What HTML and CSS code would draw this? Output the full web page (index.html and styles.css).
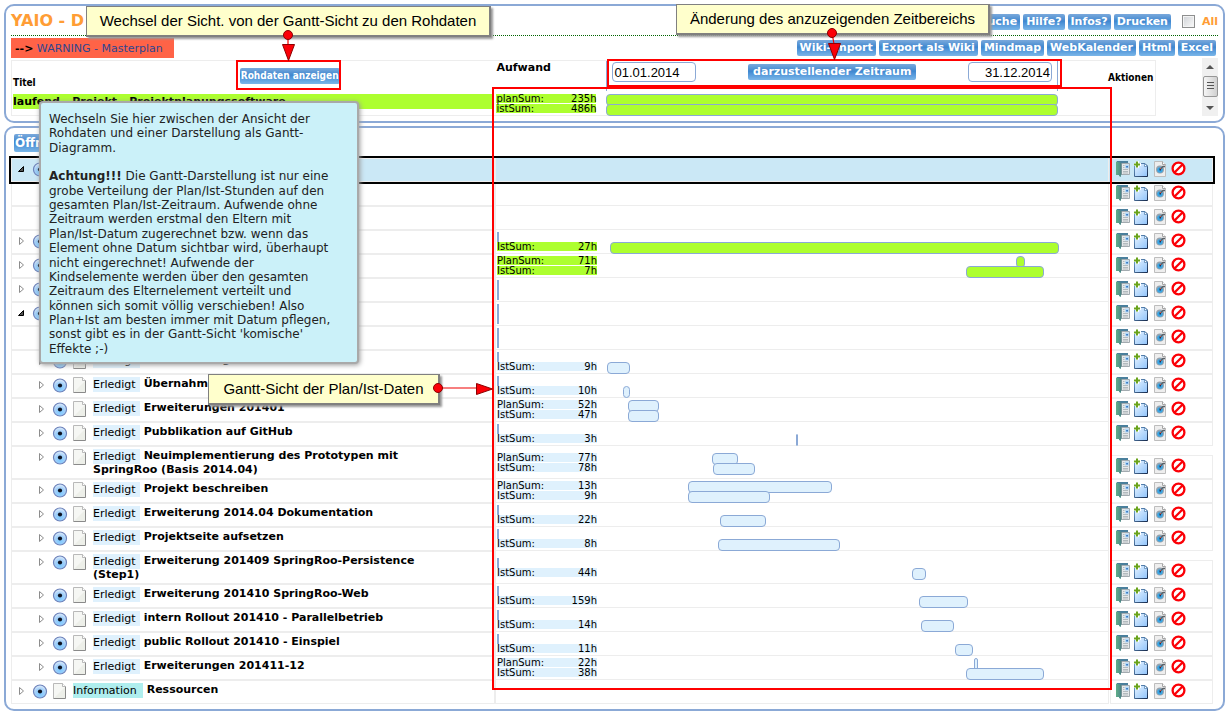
FILE: index.html
```html
<!DOCTYPE html>
<html lang="de">
<head>
<meta charset="utf-8">
<title>YAIO</title>
<link rel="stylesheet" href="styles.css">
</head>
<body>
<svg class="defs" aria-hidden="true">
  <defs>
    <linearGradient id="g-book" x1="0" y1="0" x2="1" y2="0"><stop offset="0" stop-color="#5fae88"/><stop offset="1" stop-color="#4f8a8a"/></linearGradient>
    <linearGradient id="g-new" x1="0" y1="0" x2="1" y2="1"><stop offset="0" stop-color="#e8f4ff"/><stop offset="1" stop-color="#8fc3fb"/></linearGradient>
    <linearGradient id="g-edge" x1="0" y1="0" x2="1" y2="1"><stop offset="0" stop-color="#6fa3d6"/><stop offset="1" stop-color="#16294a"/></linearGradient>
    <radialGradient id="g-radio" cx=".5" cy=".7" r=".65"><stop offset="0" stop-color="#7cc8ff"/><stop offset=".6" stop-color="#a3d0f9"/><stop offset="1" stop-color="#dbeafb"/></radialGradient>
  </defs>
  <symbol id="i-book" viewBox="0 0 18 18">
    <path d="M2 1h11v3H7v10H2z" fill="#4a7f9c"/>
    <path d="M1 1.500l5 1v14.500l-2-1v-1H1z" fill="url(#g-book)"/>
    <path d="M6.500 3.500h8v11h-8z" fill="#e6e8ea" stroke="#a3abb0"/>
    <path d="M6 3v12" stroke="#4d7d80"/>
    <path d="M8 5.500h1.500M8 7.500h1.500M8 9.500h5M8 11.500h5M8 13h5" stroke="#a5adb2" stroke-width=".8"/>
    <path d="M10 4.500h4v4h-4z" fill="#b4d8f6"/><path d="M11.300 6h1.500v1.500h-1.500z" fill="#1b63b5"/>
  </symbol>
  <symbol id="i-new" viewBox="0 0 18 18">
    <path d="M1.500 3.500h10.500l2.500 2.500v10.500h-13z" fill="url(#g-new)" stroke="url(#g-edge)"/>
    <path d="M11.500 3.500v3h3z" fill="#fff" stroke="#4c7cae" stroke-width=".7"/>
    <path d="M3 1h3v2h2v3H6v2H3V6H1V3h2z" fill="#fff"/>
    <path d="M4 1.500v6M1 4.500h6" stroke="#6aa31c" stroke-width="2"/>
  </symbol>
  <symbol id="i-view" viewBox="0 0 18 18">
    <path d="M3.500 1.500h8l3 3v12h-11z" fill="#eeeeee" stroke="#bdbdbd"/>
    <path d="M11.500 1.500v3h3" fill="#fff" stroke="#a5a5a5"/>
    <circle cx="9" cy="9.500" r="4" fill="#97a3ae"/>
    <circle cx="9" cy="10" r="2.800" fill="#39a5e4"/>
    <path d="M9 9.500l3-3h2" stroke="#5b6268" stroke-width="1.500" fill="none"/>
    <path d="M8.500 8.500h1.500v2h-1.500z" fill="#28324e"/><path d="M9 8h1v1H9z" fill="#d45545"/>
  </symbol>
  <symbol id="i-stop" viewBox="0 0 18 18">
    <circle cx="9.500" cy="8.500" r="5.900" fill="#fff" stroke="#fb0007" stroke-width="2.300"/>
    <path d="M5.500 12.500l8-8" stroke="#fb0007" stroke-width="2.300"/>
  </symbol>
  <symbol id="i-radio" viewBox="0 0 16 16">
    <circle cx="8" cy="7.500" r="6.500" fill="url(#g-radio)" stroke="#6d83bb" stroke-width="1.200"/>
    <circle cx="8" cy="7.500" r="2.100" fill="#0d1220"/>
  </symbol>
  <symbol id="i-file" viewBox="0 0 14 16">
    <path d="M.500 .500h9l3 3v12H.500z" fill="#f6f7f4"/>
    <path d="M1 15L12 4v11z" fill="#edefe9"/>
    <path d="M.500 15.500V.500h9l3 3" fill="none" stroke="#b9b9b9"/>
    <path d="M12.500 3.500v12H.500" fill="none" stroke="#8a8a8a"/>
    <path d="M9.500 .500v3h3" fill="#fff" stroke="#aaa" stroke-width=".8"/>
  </symbol>
  <symbol id="i-closed" viewBox="0 0 10 10"><path d="M3.500 1.500v7l4-3.500z" fill="#fff" stroke="#8c8c8c"/></symbol>
  <symbol id="i-open" viewBox="0 0 10 10"><path d="M7.500 2.500v5h-5z" fill="#555" stroke="#000"/></symbol>
</svg>

<main class="page">
  <section class="panel head-panel">
    <header class="title-bar">
      <h1>YAIO - D</h1>
      <div class="buttons">
        <button class="btn">Suche</button><button class="btn">Hilfe?</button><button class="btn">Infos?</button><button class="btn">Drucken</button>
        <label class="all"><input type="checkbox">All</label>
      </div>
    </header>
    <div class="sub-bar">
      <p class="warning"><b>--&gt;</b> <a href="#masterplan">WARNING - Masterplan</a></p>
      <div class="buttons">
        <button class="btn">Wiki-Import</button><button class="btn">Export als Wiki</button><button class="btn">Mindmap</button><button class="btn">WebKalender</button><button class="btn">Html</button><button class="btn">Excel</button>
      </div>
    </div>
    <div class="summary">
      <table class="summary-table">
        <tr class="caption-row">
          <th class="s-title"><div class="s-title-in"><span>Titel</span><button class="btn raw">Rohdaten anzeigen</button></div></th>
          <th class="s-gantt"><div class="range"><span class="effort">Aufwand</span>
            <div class="range-in"><input class="date" type="text" aria-label="Von" value="01.01.2014"><button class="btn period">darzustellender Zeitraum</button><input class="date end" type="text" aria-label="Bis" value="31.12.2014"></div></div></th>
          <th class="s-act">Aktionen</th>
        </tr>
        <tr class="sum-row">
          <td class="s-title"><div class="project">laufend - Projekt - Projektplanungssoftware</div></td>
          <td class="s-gantt" id="summary-gantt"></td>
          <td class="s-act"></td>
        </tr>
      </table>
      <div class="scrollbar"><i class="up"></i><i class="thumb"></i><i class="down"></i></div>
    </div>
  </section>

  <section class="panel tree-panel">
    <button class="btn open-all">Öffnen</button>
    <table class="tree">
      <colgroup><col class="c-title"><col><col class="c-act"></colgroup>
      <tbody id="rows"></tbody>
    </table>
  </section>
</main>

<aside class="tip">
  <p>Wechseln Sie hier zwischen der Ansicht der<br>Rohdaten und einer Darstellung als Gantt-<br>Diagramm.</p>
  <p><b>Achtung!!!</b> Die Gantt-Darstellung ist nur eine<br>grobe Verteilung der Plan/Ist-Stunden auf den<br>gesamten Plan/Ist-Zeitraum. Aufwende ohne<br>Zeitraum werden erstmal den Eltern mit<br>Plan/Ist-Datum zugerechnet bzw. wenn das<br>Element ohne Datum sichtbar wird, überhaupt<br>nicht eingerechnet! Aufwende der<br>Kindselemente werden über den gesamten<br>Zeitraum des Elternelement verteilt und<br>können sich somit völlig verschieben! Also<br>Plan+Ist am besten immer mit Datum pflegen,<br>sonst gibt es in der Gantt-Sicht 'komische'<br>Effekte ;-)</p>
</aside>

<div class="mark mark-raw"></div>
<div class="mark mark-range"></div>
<div class="mark mark-gantt"></div>
<div class="callout call-view">Wechsel der Sicht. von der Gantt-Sicht zu den Rohdaten</div>
<div class="callout call-range">Änderung des anzuzeigenden Zeitbereichs</div>
<div class="callout call-gantt">Gantt-Sicht der Plan/Ist-Daten</div>
<svg class="arrows" width="1229" height="714" aria-hidden="true">
  <g stroke="#f00000" stroke-width="1.200"><path d="M288 35v10M832 33l2 11M438 388h40"/></g>
  <g fill="#fb0007" stroke="#8c0000">
    <path d="M282.500 44.500h12l-6 16zM828.500 43.500h12l-6 16zM476.500 383.500v11l16-5.500z"/>
    <circle cx="288" cy="35" r="4.500"/><circle cx="832" cy="33" r="4.500"/><circle cx="438" cy="388" r="4.500"/>
  </g>
</svg>
<script src="rows.js"></script>
</body>
</html>
```

FILE: styles.css
```css
* { box-sizing: border-box; }
body { margin: 0; background: #fff; color: #000; font: 11px/14px "DejaVu Sans", Verdana, sans-serif; }
h1, p { margin: 0; }
button { margin: 0; padding: 0; border: 0; background: none; font: inherit; }
.defs { position: absolute; width: 0; height: 0; }
.page { display: flex; flex-direction: column; gap: 3px; padding: 4px; }
.panel { border: 2px solid #8ba9d6; border-radius: 10px; padding: 0 5px 5px; }

.btn { height: 16px; padding: 0 3px; border-radius: 2px; color: #fff; font-weight: bold; line-height: 16px; white-space: nowrap;
  background: linear-gradient(#7aa9dc, #3f87cf 45%, #4a90d6 55%, #7ab6e8); }
.buttons { display: flex; align-items: center; gap: 3px; }

.title-bar { display: flex; justify-content: space-between; align-items: center; height: 30px; border-bottom: 1px dotted #006400; }
.title-bar .btn { margin-top: 2px; }
h1 { color: #ff9d35; font-size: 16px; line-height: 20px; }
.all { display: flex; align-items: center; gap: 7px; margin: 2px 0 0 8px; color: #ff9d35; font-weight: bold; }
.all input { appearance: none; width: 13px; height: 13px; margin: 0; border: 1px solid #8e8f8f; background: linear-gradient(135deg, #cfd2d6, #fafafa); box-shadow: inset 0 0 0 1px #f4f4f4; }

.sub-bar { display: flex; justify-content: space-between; align-items: center; height: 20px; margin-top: 2px; padding-right: 2px; }
.warning { height: 20px; padding: 0 11px 0 4px; background: #ff6347; line-height: 22px; }
.warning a { color: #2f4590; text-decoration: none; }

.summary { display: flex; align-items: flex-start; }
.summary-table { flex: 1; margin-top: 2px; border: 1px solid #ededed; border-spacing: 0; table-layout: fixed; height: 56px; }
.summary-table th, .summary-table td { padding: 0; text-align: left; vertical-align: top; }
.caption-row { height: 33px; }
.sum-row { height: 21px; }
.s-title { width: 42.300%; }
.s-act { width: 48px; font-size: 10px; font-family: "DejaVu Sans Condensed", "DejaVu Sans", sans-serif; }
.summary-table th.s-act { padding: 10px 0 0 1px; }
.summary-table .s-gantt { padding-left: 1px; }
.s-title-in { display: grid; grid-template-columns: 1fr 1fr; padding: 7px 1px 0; font: bold 10px/14px "DejaVu Sans Condensed", "DejaVu Sans", sans-serif; }
.s-title-in span { padding-top: 8px; }
.raw { justify-self: start; margin-left: -14px; padding: 0 1px; }
.project { height: 15px; margin: 0 1px; background: #adff2f; font-weight: bold; line-height: 15px; }
.range { display: flex; }
.effort { width: 110px; font-weight: bold; }
.range-in { display: flex; flex: 1; justify-content: space-between; align-items: center; height: 30px; margin-right: 49px; padding: 0 5px 8px; border: solid #8ba9d6; border-width: 0 1px; }
.period { padding: 0 5px; }
.date { width: 84px; height: 20px; padding: 0 1px; border: 1px solid #8ba9d6; border-radius: 4px; background: #fff; font: 13px/16px "Liberation Sans", Arial, sans-serif; }
.end { text-align: right; }
.scrollbar { display: flex; flex-direction: column; align-items: center; width: 16px; height: 58px; margin-left: 46px; padding-top: 7px; background: #f0f0f0; }
.up { border: 4px solid transparent; border-top: 0; border-bottom: 4px solid #555; }
.down { margin-top: 9px; border: 4px solid transparent; border-bottom: 0; border-top: 4px solid #555; }
.thumb { width: 15px; height: 21px; margin-top: 7px; border: 1px solid #979797; border-radius: 2px;
  background: linear-gradient(#555, #555) 3px 5px / 7px 1px no-repeat, linear-gradient(#555, #555) 3px 8px / 7px 1px no-repeat, linear-gradient(#555, #555) 3px 11px / 7px 1px no-repeat, linear-gradient(90deg, #f5f5f5, #d0d0d0); }

.tree-panel { padding: 6px 10px 5px 5px; }
.open-all { display: block; height: 18px; margin: 0 0 6px 3px; padding: 0 1px; font-size: 12px; line-height: 18px; }
.tree { width: 100%; table-layout: fixed; border-spacing: 0; }
.c-title { width: 40.266%; }
.c-act { width: 104px; }
.tree tr { height: 24px; }
.tree td { padding: 0; }
.tree .t { border: 1px solid #ededed; vertical-align: top; }
.tree .g { padding: 1px 0 0 1px; border: 1px solid #ededed; border-top: 0; vertical-align: middle; }
.tree .a { vertical-align: bottom; }
.active { outline: 2px solid #000; background: #cbe8f6; }

.node { display: flex; padding: 1px 50px 1px 4px; min-height: 22px; }
.node.child { padding-left: 24px; }
.node svg { flex: none; }
.expander { width: 10px; height: 10px; margin: 4px 6px 0 0; }
.radio { width: 16px; height: 16px; margin: 2px 5px 0 0; }
.file { width: 14px; height: 16px; margin: 1px 6px 0 0; }
.node p { padding-top: 1px; }
.kind { display: inline-block; height: 15px; margin: 0 4px -1px 0; padding-right: 4px; background: #dff1fd; line-height: 16px; vertical-align: top; }
.kind.info { background: #afeeee; padding-right: 6px; }

.acts { display: flex; height: 24px; margin-left: 1px; padding: 1px 0 0 4px; border: 1px solid #ededed; }
.acts button, .acts svg { display: block; width: 18px; height: 18px; }

.line { display: flex; height: 10px; }
.label { display: flex; justify-content: space-between; width: 100px; height: 9px; background: #dff1fd; font-size: 10px; line-height: 9px; }
.empty { width: 2px; height: 10px; margin-right: 98px; background: #8ba9d6; }
.scale { position: relative; flex: 1; margin: 0 49px 0 10px; }
.bar { position: absolute; top: 0; height: 12px; border: 1px solid #8ba9d6; border-radius: 4px; background: #dff1fd; }
.run .label, .run .bar { background: #adff2f; }

.tip { position: absolute; left: 39px; top: 101px; width: 320px; padding: 9px 8px 6px; border: 2px solid #a9a9a9; border-radius: 4px; background: #cbf1f9; box-shadow: 1px 1px 5px #999; color: #222; font-size: 12px; line-height: 1.2; white-space: nowrap; }
.tip p + p { margin-top: 14px; }
.mark { position: absolute; border: 2px solid #f00; }
.mark-raw { left: 236px; top: 60px; width: 105px; height: 30px; }
.mark-range { left: 607px; top: 59px; width: 455px; height: 28px; }
.mark-gantt { left: 492px; top: 87px; width: 620px; height: 603px; }
.callout { position: absolute; padding-top: 4px; border: 1px solid #808080; border-width: 1px 2px 2px 1px; background: #ffffcc; box-shadow: 2px 2px 2px #999; font: 15px/20px "Liberation Sans", Arial, sans-serif; text-align: center; white-space: nowrap; }
.call-view { left: 86px; top: 6px; width: 405px; height: 31px; }
.call-range { left: 676px; top: 4px; width: 314px; height: 31px; }
.call-gantt { left: 208px; top: 374px; width: 232px; height: 31px; }
.arrows { position: absolute; left: 0; top: 0; pointer-events: none; }
```

FILE: rows.js
```js
// Bar = [label, hours, start, length]; start and length count in units of the scale, which is SPAN wide.
const SPAN = 452;
const rows = [
  { exp: 'open', active: 1 },
  {}, {},
  { exp: 'closed', run: 1, plan: 'none', ist: ['IstSum:', 27, 3, 449] },
  { exp: 'closed', run: 1, plan: ['PlanSum:', 71, 409, 9], ist: ['IstSum:', 7, 359, 78] },
  { exp: 'closed', plan: 'none', ist: 'none' },
  { exp: 'open', plan: 'none', ist: 'none' },
  { plan: 'none', ist: 'none' },
  { child: 1, name: 'Initialisierung', ist: ['IstSum:', 9, 0, 23], plan: 'none' },
  { child: 1, name: 'Übernahme', plan: 'none', ist: ['IstSum:', 10, 16, 7] },
  { child: 1, name: 'Erweiterungen 201401', plan: ['PlanSum:', 52, 21, 31], ist: ['IstSum:', 47, 21, 31] },
  { child: 1, name: 'Pubblikation auf GitHub', plan: 'none', ist: ['IstSum:', 3, 189, 2] },
  { child: 1, name: 'Neuimplementierung des Prototypen mit<br>SpringRoo (Basis 2014.04)', plan: ['PlanSum:', 77, 105, 26], ist: ['IstSum:', 78, 106, 42] },
  { child: 1, name: 'Projekt beschreiben', plan: ['PlanSum:', 13, 81, 144], ist: ['IstSum:', 9, 81, 82] },
  { child: 1, name: 'Erweiterung 2014.04 Dokumentation', plan: 'none', ist: ['IstSum:', 22, 113, 46] },
  { child: 1, name: 'Projektseite aufsetzen', plan: 'none', ist: ['IstSum:', 8, 111, 122] },
  { child: 1, name: 'Erweiterung 201409 SpringRoo-Persistence<br>(Step1)', plan: 'none', ist: ['IstSum:', 44, 305, 14] },
  { child: 1, name: 'Erweiterung 201410 SpringRoo-Web', plan: 'none', ist: ['IstSum:', 159, 312, 49] },
  { child: 1, name: 'intern Rollout 201410 - Parallelbetrieb', plan: 'none', ist: ['IstSum:', 14, 314, 33] },
  { child: 1, name: 'public Rollout 201410 - Einspiel', plan: 'none', ist: ['IstSum:', 11, 348, 18] },
  { child: 1, name: 'Erweiterungen 201411-12', plan: ['PlanSum:', 22, 367, 4], ist: ['IstSum:', 38, 359, 78] },
  { exp: 'closed', name: 'Ressourcen', info: 1 }
];

const icon = (id, cls = '') => `<svg class="${cls}" aria-hidden="true"><use href="#i-${id}"/></svg>`;

function line(v) {
  if (!v) return '<div class="line"></div>';
  if (v === 'none') return '<div class="line"><span class="empty"></span></div>';
  const pct = n => (n / SPAN * 100).toFixed(3) + '%';
  return `<div class="line"><div class="label"><span>${v[0]}</span><span>${v[1]}h</span></div>` +
    `<div class="scale"><i class="bar" style="left:${pct(v[2])};width:${pct(v[3])}"></i></div></div>`;
}

function node(r) {
  const exp = r.child ? 'closed' : r.exp;
  if (!exp) return '<div class="node"></div>';
  const text = r.name
    ? `<p><span class="kind${r.info ? ' info' : ''}">${r.info ? 'Information' : 'Erledigt'}</span><b>${r.name}</b></p>` : '';
  return `<div class="node${r.child ? ' child' : ''}">${icon(exp, 'expander')}${icon('radio', 'radio')}${icon('file', 'file')}${text}</div>`;
}

const actions = [['book', 'Bearbeiten'], ['new', 'Neu'], ['view', 'Ansehen'], ['stop', 'Löschen']]
  .map(([id, name]) => `<button aria-label="${name}">${icon(id)}</button>`).join('');

document.getElementById('rows').innerHTML = rows.map(r =>
  `<tr class="${r.active ? 'active' : ''}"><td class="t">${node(r)}</td>` +
  `<td class="g${r.run ? ' run' : ''}">${line(r.plan)}${line(r.ist)}</td>` +
  `<td class="a"><div class="acts">${actions}</div></td></tr>`).join('');

const sum = document.getElementById('summary-gantt');
sum.classList.add('run');
sum.innerHTML = line(['planSum:', 235, 0, SPAN]) + line(['istSum:', 486, 0, SPAN]);
```
